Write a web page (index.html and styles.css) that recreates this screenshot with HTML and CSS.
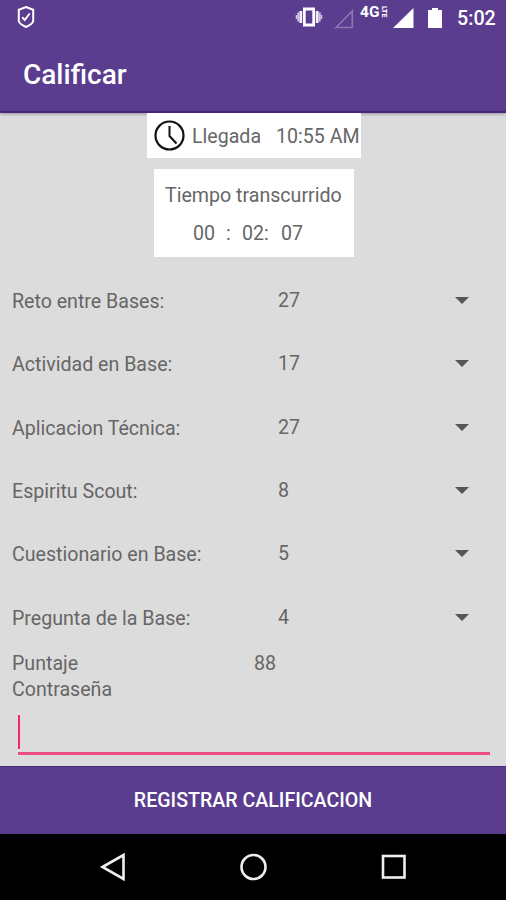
FILE: index.html
```html
<!DOCTYPE html>
<html lang="es">
<head>
<meta charset="utf-8">
<title>Calificar</title>
<link rel="stylesheet" href="styles.css">
</head>
<body>
<header class="top">
  <div class="status">
    <svg class="shield" width="18" height="24" viewBox="0 0 18 24" fill="none" stroke="#fff" stroke-width="2"><path d="M9 2 16.2 4.8V16.2C15.5 18.5 12.5 20.3 9 22 5.500 20.3 2.500 18.500 1.800 16.200V4.800Z"/><path d="m5.200 12.300 2.500 2.700 5-6.500"/></svg>
    <svg class="vibrate" width="28" height="22" viewBox="0 0 28 22"><path d="M8 1.500h12v19H8zM10.700 4.500v13h6.600v-13z" fill="#fff" fill-rule="evenodd"/><path d="M5.800 5v12M22.200 5v12" stroke="#f3effa" stroke-width="2.800"/><path d="M3.300 6.500v9M24.700 6.500v9" stroke="#cfc4e2" stroke-width="2"/><path d="M1.500 9v4M26.500 9v4" stroke="#d4cae5" stroke-width="1.500"/></svg>
    <svg class="nosignal" width="20" height="20" viewBox="0 0 20 20"><path d="M2 18.500 18.300 2V18.500Z" fill="none" stroke="#8d76b4" stroke-width="1.700"/></svg>
    <span class="net">4G</span><span class="lte">LTE</span>
    <svg class="signal" width="21" height="20" viewBox="0 0 21 20"><path d="M0 20 20.500 0V20Z" fill="#fff"/></svg>
    <svg class="battery" width="14" height="20" viewBox="0 0 14 20"><path d="M4 0h6v2h4v18H0V2h4z" fill="#fff"/></svg>
    <time class="clock">5:02</time>
  </div>
  <h1 class="title">Calificar</h1>
</header>
<main class="content">
  <section class="arrival">
    <svg width="32" height="32" viewBox="0 0 32 32" fill="none" stroke="#111"><circle cx="15.500" cy="15.500" r="14" stroke-width="2.200"/><path d="M15.500 6v10l7 7.500" stroke-width="2"/></svg>
    <span class="arrival-label">Llegada</span>
    <span class="arrival-time">10:55 AM</span>
  </section>
  <section class="elapsed">
    <div class="elapsed-label">Tiempo transcurrido</div>
    <div class="timer"><span class="hours">00</span><span class="colon">:</span><span class="minutes">02:</span><span>07</span></div>
  </section>
  <section class="scores">
    <div class="row"><span class="label">Reto entre Bases:</span><span class="value">27</span><i class="arrow"></i></div>
    <div class="row"><span class="label">Actividad en Base:</span><span class="value">17</span><i class="arrow"></i></div>
    <div class="row"><span class="label">Aplicacion Técnica:</span><span class="value">27</span><i class="arrow"></i></div>
    <div class="row"><span class="label">Espiritu Scout:</span><span class="value">8</span><i class="arrow"></i></div>
    <div class="row"><span class="label">Cuestionario en Base:</span><span class="value">5</span><i class="arrow"></i></div>
    <div class="row"><span class="label">Pregunta de la Base:</span><span class="value">4</span><i class="arrow"></i></div>
  </section>
  <div class="total"><span class="total-label">Puntaje</span><span>88</span></div>
  <div class="password-label">Contraseña</div>
  <div class="field"><div class="caret"></div></div>
</main>
<button class="submit">REGISTRAR CALIFICACION</button>
<nav class="nav">
  <svg width="30" height="32" viewBox="0 0 30 32"><path d="M3.500 16 24.500 4V28Z"/></svg>
  <svg width="30" height="32" viewBox="0 0 30 32"><circle cx="14.500" cy="16" r="12"/></svg>
  <svg width="30" height="32" viewBox="0 0 30 32"><rect x="4" y="5" width="21.500" height="21.500"/></svg>
</nav>
</body>
</html>
```
FILE: styles.css
```css
* { box-sizing: border-box; }
body {
  margin: 0;
  width: 506px;
  height: 900px;
  display: flex;
  flex-direction: column;
  overflow: hidden;
  background: #dcdcdc;
  color: #666;
  font: 19.6px/26px Roboto, sans-serif;
}
svg { display: block; flex: none; }
.top {
  height: 113px;
  flex: none;
  background: #5a3d8e;
  border-bottom: 2px solid #482582;
  box-shadow: 0 1px 3px #0005;
  color: #fff;
}
.status { display: flex; height: 37px; align-items: flex-start; padding-left: 17px; }
.shield { margin-top: 5px; }
.vibrate { margin: 6px 0 0 260px; }
.nosignal { margin: 9px 0 0 11px; }
.net { margin: 4px 0 0 6px; font-size: 15.500px; line-height: 16px; font-weight: 700; width: 20px; }
.lte { writing-mode: vertical-rl; margin-top: 6px; width: 8px; font-size: 7px; line-height: 8px; font-weight: 900; }
.signal { margin: 8px 0 0 5px; }
.battery { margin: 8px 0 0 14px; }
.clock { margin: 6px 0 0 15px; font-size: 19.700px; line-height: 25px; font-weight: 500; }
.title { margin: 20px 0 0 23px; font-size: 28px; line-height: 36px; font-weight: 500; }
.content { height: 653px; flex: none; }
.arrival {
  width: 214px;
  height: 45px;
  margin-left: 147px;
  padding-left: 7px;
  display: flex;
  align-items: center;
  background: #fff;
  white-space: nowrap;
}
.arrival-label, .arrival-time { padding-top: 2px; }
.arrival-label { margin-left: 6px; width: 84px; }
.elapsed { width: 200px; height: 88px; margin: 11px 0 0 154px; padding-top: 14px; background: #fff; }
.elapsed-label { padding-left: 11px; }
.timer { display: flex; padding: 12px 0 0 39px; }
.hours { width: 33px; }
.colon { width: 16px; }
.minutes { width: 39px; }
.scores { margin-top: 12px; }
.row { display: flex; align-items: center; height: 63.300px; padding-left: 12px; }
.label { width: 266px; padding-top: 3px; }
.value { width: 177px; padding-top: 1px; }
.arrow { border: 7px solid transparent; border-top-color: #555; border-bottom: 0; }
.total, .password-label { height: 26.700px; padding-left: 12px; }
.total { display: flex; margin-top: 2px; }
.total-label { width: 242px; }
.field { height: 51px; margin: 0 16px 0 18px; padding-top: 11px; border-bottom: 3px solid #ee4e82; }
.caret { width: 2px; height: 34px; background: #ef2870; }
.submit {
  height: 68px;
  flex: none;
  border: 0;
  border-top: 1px solid #482b7c;
  padding: 0;
  background: #5a3d8e;
  color: #fff;
  font: 500 19.600px/26px Roboto, sans-serif;
}
.nav { height: 66px; flex: none; display: flex; justify-content: center; gap: 110px; padding: 17px 0 0 1px; background: #000; }
.nav svg { fill: none; stroke: #eee; stroke-width: 2.600; }
```
